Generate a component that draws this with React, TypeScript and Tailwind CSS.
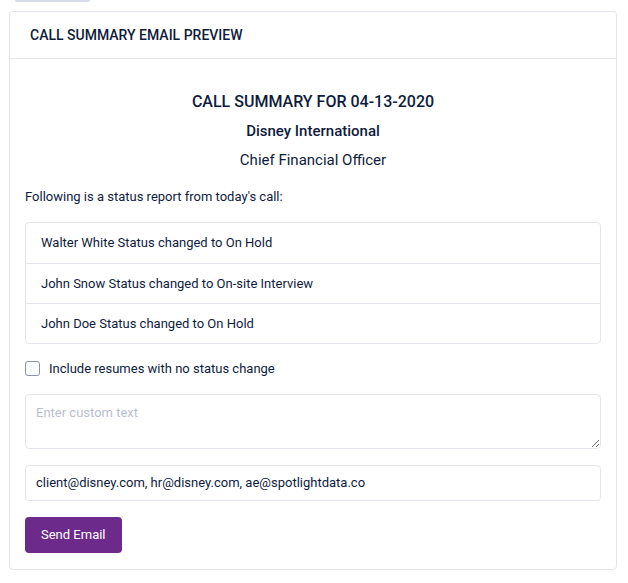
import React, { useState } from 'react';

const updates = [
  'Walter White Status changed to On Hold',
  'John Snow Status changed to On-site Interview',
  'John Doe Status changed to On Hold',
];

export default function App() {
  const [includeAll, setIncludeAll] = useState(false);
  const [custom, setCustom] = useState('');
  const [emails, setEmails] = useState('client@disney.com, hr@disney.com, ae@spotlightdata.co');

  return (
    <div className="min-h-[583px] bg-white text-[#0f1b3d]" style={{ fontFamily: 'Roboto, "Noto Sans", sans-serif' }}>
      <div className="ml-[15px] h-[2px] w-[75px] rounded-b bg-[#d8dce8]" />
      <div className="ml-[9px] mr-[11px] mt-[9px] rounded border border-[#e3e6ef]">
        <div className="flex h-[47px] items-center border-b border-[#e3e6ef] px-[20px]">
          <h3 className="text-[14px] font-medium">CALL SUMMARY EMAIL PREVIEW</h3>
        </div>
        <div className="px-[15px] pb-[16px] pt-[33px]">
          <div className="text-center">
            <h2 className="text-[16px] font-medium leading-[20px]">CALL SUMMARY FOR 04-13-2020</h2>
            <p className="mt-[9px] text-[15px] font-medium leading-[20px]">Disney International</p>
            <p className="mt-[9px] text-[15px] leading-[20px]">Chief Financial Officer</p>
          </div>
          <p className="mt-[18px] text-[13px] leading-[18px]">Following is a status report from today's call:</p>

          <ul className="mt-[16px] rounded border border-[#e3e6ef]">
            {updates.map((u, i) => (
              <li
                key={u}
                className={`flex h-[40px] items-center px-[15px] text-[13px] ${i > 0 ? 'border-t border-[#e3e6ef]' : ''}`}
              >
                {u}
              </li>
            ))}
          </ul>

          <label className="mt-[15px] flex cursor-pointer items-center gap-[9px] text-[13px]">
            <input
              type="checkbox"
              checked={includeAll}
              onChange={(e) => setIncludeAll(e.target.checked)}
              className="h-[15px] w-[15px] appearance-none rounded-[3px] border border-[#8a93a8] bg-white checked:bg-[#6c2b8a]"
            />
            Include resumes with no status change
          </label>

          <textarea
            value={custom}
            onChange={(e) => setCustom(e.target.value)}
            placeholder="Enter custom text"
            className="mt-[15px] block h-[55px] w-full rounded border border-[#e3e6ef] px-[10px] py-[8px] text-[13px] placeholder:text-[#b9bfcc] focus:outline-none"
          />

          <input
            value={emails}
            onChange={(e) => setEmails(e.target.value)}
            className="mt-[16px] block h-[36px] w-full rounded border border-[#e3e6ef] px-[10px] text-[13px] focus:outline-none"
          />

          <button className="mt-[16px] h-[36px] rounded bg-[#6c2b8a] px-[16px] text-[13px] text-white hover:bg-[#5d2377]">
            Send Email
          </button>
        </div>
      </div>
    </div>
  );
}
